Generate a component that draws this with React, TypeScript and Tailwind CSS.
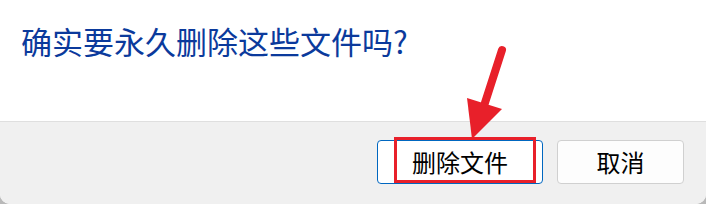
export default function App() {
  return (
    <div className="relative w-[706px] h-[204px] bg-[#b9b9b9] overflow-hidden font-['Noto_Sans_CJK_SC','Noto_Sans',sans-serif]">
      <div className="flex flex-col h-[204px] bg-white rounded-b-[10px] overflow-hidden">
        <div className="h-[121px] pt-[25px] pl-[21px]">
          <h1 className="text-[31px] leading-none text-[#0b3a9c] font-normal">
            确实要永久删除这些文件吗?
          </h1>
        </div>
        <div className="flex-1 flex justify-end items-start gap-[14px] pt-[18px] pr-[22px] bg-[#f0f0f0] border-t border-[#dfdfdf]">
          <div className="relative">
            <button className="w-[166px] h-[44px] rounded-[4px] border border-[#0067c0] bg-white text-[24px] leading-none text-black">
              删除文件
            </button>
            <div className="absolute left-[17px] top-[-3px] w-[142px] h-[46px] border-[3px] border-[#e8202a]" />
          </div>
          <button className="w-[127px] h-[44px] rounded-[4px] border border-[#d0d0d0] bg-[#fdfdfd] text-[24px] leading-none text-black">
            取消
          </button>
        </div>
      </div>
      <svg className="absolute left-0 top-0" width="706" height="204" viewBox="0 0 706 204">
        <line x1="502" y1="50" x2="482" y2="112" stroke="#e8202a" strokeWidth="8" strokeLinecap="round" />
        <polygon points="467,98 502,109 472,139" fill="#e8202a" />
      </svg>
    </div>
  );
}
